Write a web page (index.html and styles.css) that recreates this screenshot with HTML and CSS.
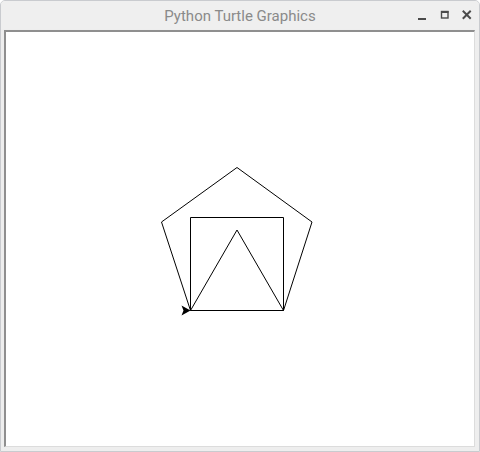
FILE: index.html
```html
<!DOCTYPE html>
<html>
<head>
<meta charset="utf-8">
<link rel="stylesheet" href="styles.css">
</head>
<body>
<div class="window">
  <div class="titlebar">
    <div class="spacer"></div>
    <div class="title">Python Turtle Graphics</div>
    <div class="controls">
      <svg class="ctl" width="14" height="14" viewBox="0 0 14 14"><rect x="2" y="10" width="8" height="2" fill="#4a4a4a"/></svg>
      <svg class="ctl" width="14" height="14" viewBox="0 0 14 14"><rect x="3.5" y="3.5" width="6.5" height="6.5" fill="none" stroke="#4a4a4a" stroke-width="1.4"/><rect x="3" y="3" width="7.5" height="2" fill="#4a4a4a"/></svg>
      <svg class="ctl" width="14" height="14" viewBox="0 0 14 14"><path d="M3.5 3.5 L10 10 M10 3.5 L3.5 10" stroke="#4a4a4a" stroke-width="2" stroke-linecap="square"/></svg>
    </div>
  </div>
  <div class="frame">
    <svg class="canvas" width="468" height="414" viewBox="6 32 468 414">
      <g fill="none" stroke="#000" stroke-width="1">
        <polygon points="190.5,310.5 283.5,310.5 312,222 237,167.5 161.5,222"/>
        <polyline points="190.5,310.5 190.5,217.5 283.5,217.5 283.5,310.5"/>
        <polyline points="190.5,310.5 237,230 283.5,310.5"/>
      </g>
      <polygon points="190.5,310.5 181.5,305.5 183.5,310.5 181.5,315.5" fill="#000"/>
    </svg>
  </div>
</div>
</body>
</html>
```
FILE: styles.css
```css
html, body {
  margin: 0;
  padding: 0;
  background: #ffffff;
}
.window {
  width: 480px;
  height: 452px;
  box-sizing: border-box;
  background: #eeeeee;
  border: 1px solid #c9cbcf;
  border-radius: 5px 5px 0 0;
  display: flex;
  flex-direction: column;
  overflow: hidden;
}
.titlebar {
  height: 28px;
  display: grid;
  grid-template-columns: 1fr auto 1fr;
  align-items: center;
  background: #efefef;
}
.title {
  font-family: Roboto, "Liberation Sans", sans-serif;
  font-size: 15px;
  color: #8a8a8a;
  padding-top: 1px;
}
.controls {
  display: flex;
  justify-content: flex-end;
  align-items: center;
  gap: 8px;
  padding-right: 5px;
}
.ctl {
  display: block;
}
.frame {
  flex: 1;
  margin: 1px 4px 4px 3px;
  border-top: 2px solid #8f8f8f;
  border-left: 2px solid #8f8f8f;
  border-right: 1px solid #dcdcdc;
  border-bottom: 1px solid #dcdcdc;
  background: #ffffff;
  display: flex;
}
.canvas {
  display: block;
}
```
